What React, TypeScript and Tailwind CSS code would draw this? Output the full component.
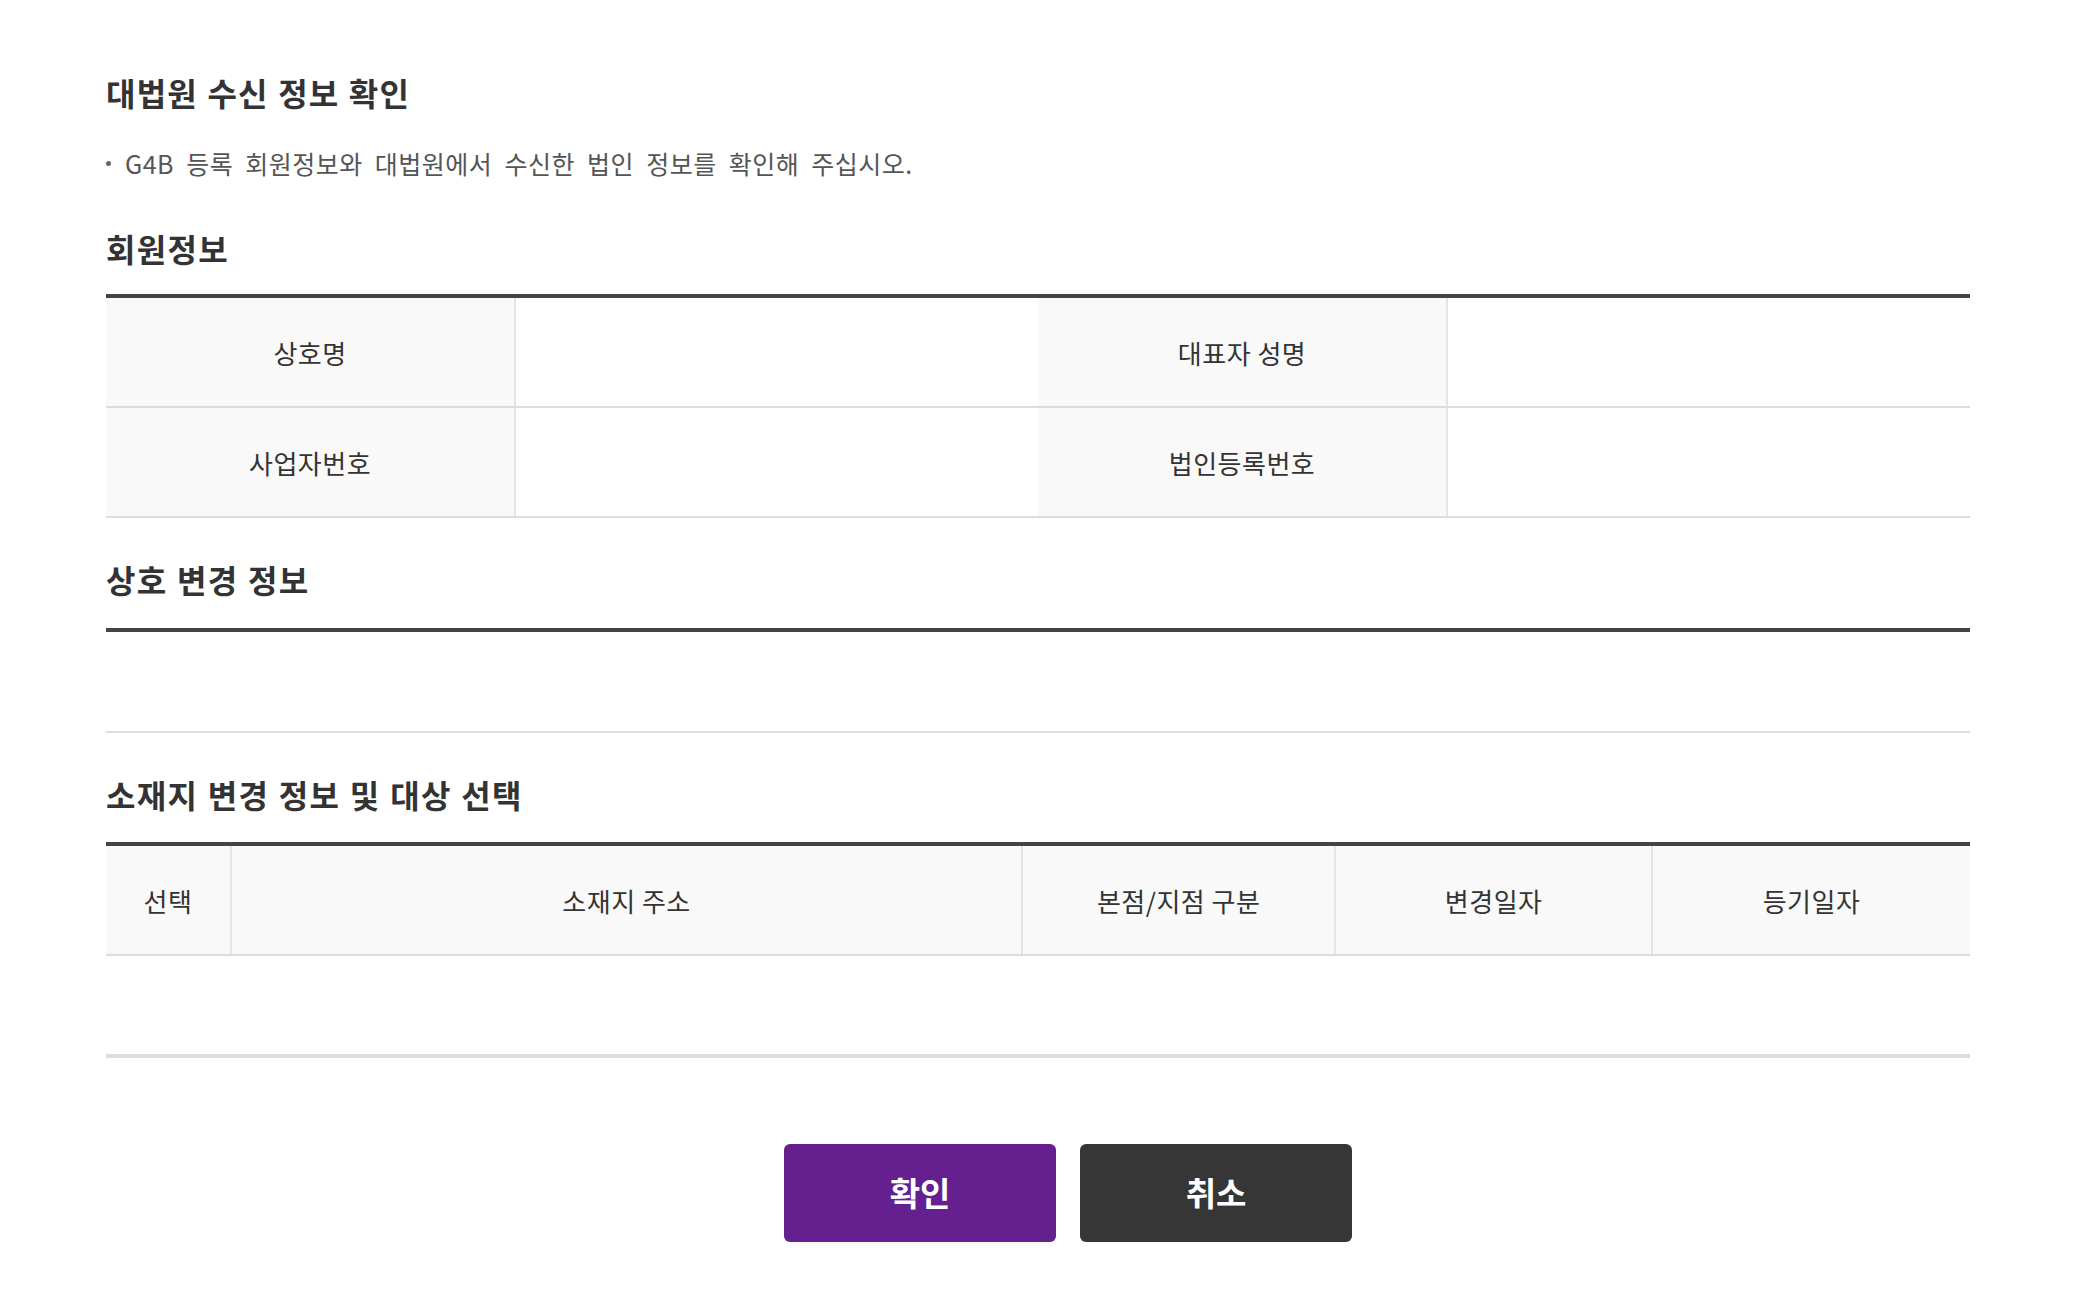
const font = { fontFamily: '"Noto Sans CJK KR", "Noto Sans", sans-serif' };

type Cell = { label: string; value?: string };

const memberRows: Cell[][] = [
  [{ label: "상호명" }, { label: "대표자 성명" }],
  [{ label: "사업자번호" }, { label: "법인등록번호" }],
];

const addressCols = [
  { label: "선택", w: "w-[6.76%]" },
  { label: "소재지 주소", w: "w-[42.44%]" },
  { label: "본점/지점 구분", w: "w-[16.8%]" },
  { label: "변경일자", w: "w-[17%]" },
  { label: "등기일자", w: "w-[17%]" },
];

function SectionTitle({ children, className }: { children: string; className: string }) {
  return (
    <h2 className={`text-[32px] font-bold leading-[30px] tracking-[1.3px] text-[#333] [word-spacing:1px] ${className}`}>
      {children}
    </h2>
  );
}

export default function App() {
  return (
    <div style={font} className="min-h-[1306px] bg-white pl-[106px] pr-[110px] pt-[77px] text-[#333]">
      <h1 className="text-[32px] font-bold leading-[30px] tracking-[1.2px] text-[#333] [word-spacing:1px]">
        대법원 수신 정보 확인
      </h1>
      <p className="mt-[44px] flex items-center text-[25px] leading-[24px] tracking-[0.5px] text-[#555] [word-spacing:6px]">
        <span className="mr-[14px] h-[5px] w-[5px] rounded-full bg-[#666]" />
        G4B 등록 회원정보와 대법원에서 수신한 법인 정보를 확인해 주십시오.
      </p>

      <SectionTitle className="mt-[58px] mb-[31px]">회원정보</SectionTitle>
      <div className="border-t-4 border-[#444]">
        {memberRows.map((row, i) => (
          <div key={i} className="flex h-[110px] border-b-2 border-[#ddd]">
            {row.map((cell) => (
              <div key={cell.label} className="flex w-1/2">
                <div className="flex w-[44%] items-center justify-center border-r-2 border-[#e4e4e4] bg-[#f9f9f9] text-[26px] tracking-[0.5px] text-[#333]">
                  {cell.label}
                </div>
                <div className="w-[56%] border-r-2 border-[#e4e4e4] last:border-r-0">{cell.value}</div>
              </div>
            ))}
          </div>
        ))}
      </div>

      <SectionTitle className="mt-[46px] mb-[34px]">상호 변경 정보</SectionTitle>
      <div className="h-[105px] border-t-4 border-b-2 border-[#444] border-b-[#ddd]" />

      <SectionTitle className="mt-[46px] mb-[33px]">소재지 변경 정보 및 대상 선택</SectionTitle>
      <div className="border-t-4 border-[#444]">
        <div className="flex h-[110px] border-b-2 border-[#ddd] bg-[#f9f9f9]">
          {addressCols.map((c, i) => (
            <div
              key={c.label}
              className={`flex ${c.w} items-center justify-center text-[26px] tracking-[0.5px] text-[#333] ${
                i < addressCols.length - 1 ? "border-r-2 border-[#e4e4e4]" : ""
              }`}
            >
              {c.label}
            </div>
          ))}
        </div>
        <div className="h-[102px] border-b-4 border-[#ddd]" />
      </div>

      <div className="mt-[86px] flex justify-center gap-[24px] pl-[60px]">
        <button className="flex h-[98px] w-[272px] items-center justify-center rounded-[6px] bg-[#651f8f] text-[33px] font-bold text-white">
          확인
        </button>
        <button className="flex h-[98px] w-[272px] items-center justify-center rounded-[6px] bg-[#363636] text-[33px] font-bold text-white">
          취소
        </button>
      </div>
    </div>
  );
}
